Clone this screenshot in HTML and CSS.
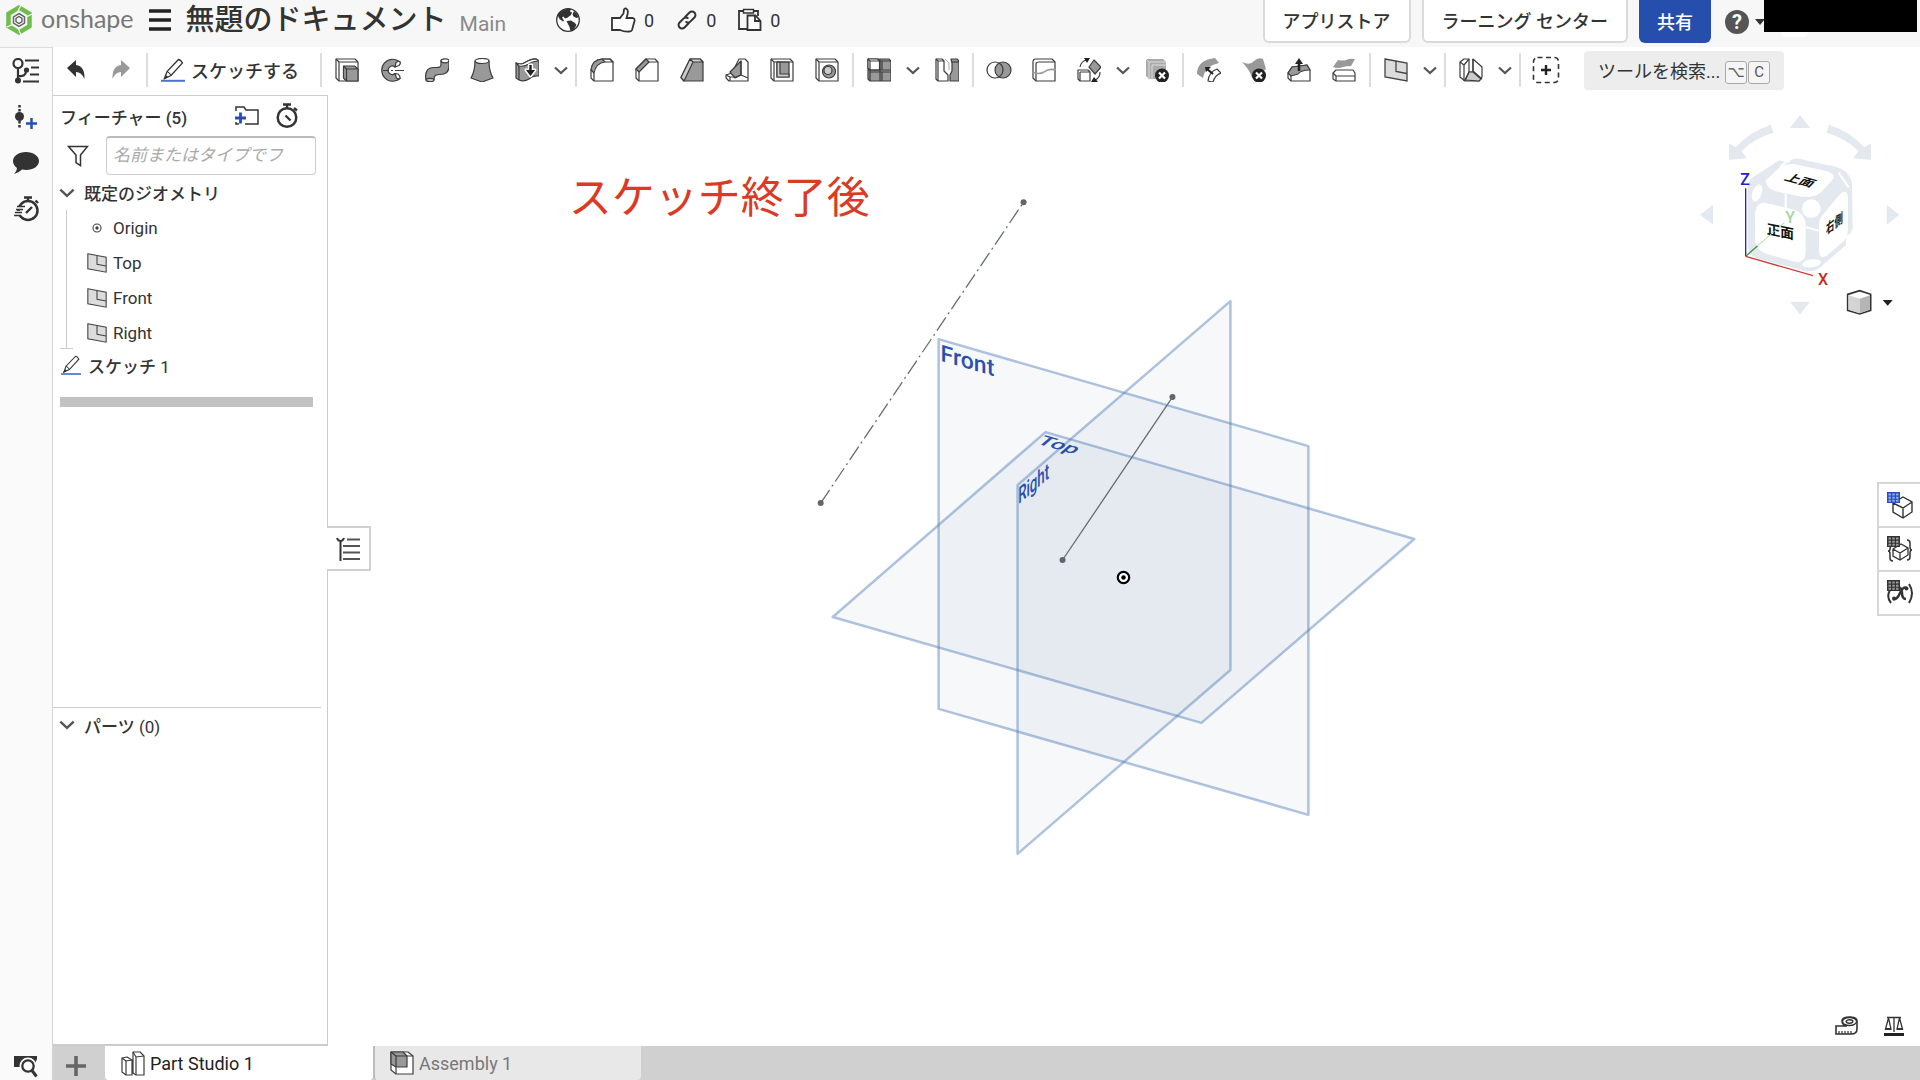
FILE: index.html
```html
<!DOCTYPE html>
<html lang="ja">
<head>
    <meta charset="UTF-8">
    <meta name="viewport" content="width=device-width, initial-scale=1.0">
    <title>無題のドキュメント | Part Studio 1</title>
    <link rel="stylesheet" href="styles.css">
</head>
<body>
    <!-- Shared icons -->
    <svg class="sprite" aria-hidden="true">
        <symbol id="chevron" viewBox="0 0 14 9"><path d="M1 1.5l6 5.5 6-5.5" fill="none" stroke="currentColor" stroke-width="2.2"/></symbol>
        <symbol id="plane" viewBox="0 0 24 24"><path d="M1 1l22 4v18L1 19z" fill="#dcdcdc" stroke="#444" stroke-width="1.3"/><path d="M12 3v10.500l11 2" fill="none" stroke="#444" stroke-width="1.300"/></symbol>
        <symbol id="pencil" viewBox="0 0 24 24"><path d="M3.500 20.500L6 13.500 17.500 1.500q2 0 4 3.500L10 17.500z" fill="#fff" stroke="#333" stroke-width="1.300"/><path d="M6 13.500q3 1 4 4M3 21l3.500-2-1.500-1.500z" fill="#333" stroke="#333"/><path d="M0 22.800h24" stroke="#4a74cf" stroke-width="2"/></symbol>
        <symbol id="grid" viewBox="0 0 13 11"><path d="M0 0h13v11H0z" fill="currentColor"/><path d="M1.500 1.500h2.500v2h-2.500zM5.300 1.500h2.500v2H5.300zM9 1.500h2.500v2H9zM1.500 4.700h2.500v2h-2.500zM5.300 4.700h2.500v2H5.300zM9 4.700h2.500v2H9zM1.500 7.800h2.500v2h-2.500zM5.300 7.800h2.500v2H5.300zM9 7.800h2.500v2H9z" fill="#fff" opacity=".5"/></symbol>
    </svg>

    <header class="header">
        <a class="logo" href="#" aria-label="onshape">
            <svg width="26" height="30" viewBox="0 0 26 30">
                <path d="M13 2.500l10.500 6.200v12.600L13 27.500 2.500 21.300V8.700z" fill="none" stroke="#6fbe4d" stroke-width="4.500"/>
                <path d="M15 0l-4 8M26 9l-6 3M1 22l7-3M15 30l-3-7" stroke="#f7f7f7" stroke-width="1.200"/>
                <path d="M13 8.500l5.500 3.300v6.400L13 21.500l-5.500-3.300v-6.400z" fill="none" stroke="#666" stroke-width="1.500"/>
                <path d="M13 11.500l3 1.800v3.400l-3 1.800-3-1.800v-3.400z" fill="none" stroke="#555" stroke-width="1.300"/>
            </svg>
            <span>onshape</span>
        </a>
        <button class="plain menu-btn" aria-label="メニュー">
            <svg width="22" height="22" viewBox="0 0 22 22"><path d="M0 2h22M0 11h22M0 20h22" stroke="#222" stroke-width="3.600"/></svg>
        </button>
        <h1 class="doc-title">無題のドキュメント</h1>
        <span class="branch">Main</span>
        <button class="plain globe" aria-label="公開">
            <svg width="24" height="24" viewBox="0 0 24 24"><circle cx="12" cy="12" r="11.300" fill="#fff" stroke="#333" stroke-width="1.300"/><path d="M4 4Q9 0 15 1l-1 2.500 2 1-1 2.500-4 3-2 .5-1.500-2-1.500 1 2 3-1 1-3.500-2.500L1.500 7z" fill="#333"/><path d="M18 3l2.500 2.500L22.500 9l-2 1-3-1.500-1-2zM10.500 13l4.500-.5 4 2.500 1.500 2-2.500 4-3.500 2-1-4z" fill="#333"/></svg>
        </button>
        <button class="plain stat">
            <svg width="26" height="26" viewBox="0 0 26 26"><path d="M2 11h8l3.500-4.500.5-4q.500-1.500 2.200-1 2.500 1.500 1.300 6l-1 3.500h6.500q2 .5 1.500 3l-2.500 9q-.5 1.500-2.500 1.500-5 .5-9.500-1.500H2z" fill="#fff" stroke="#333" stroke-width="1.800"/></svg>
            <span>0</span>
        </button>
        <button class="plain stat">
            <svg width="22" height="22" viewBox="0 0 22 22"><g transform="rotate(-45 11 11)" fill="none" stroke="#333" stroke-width="2"><path d="M10.500 14.500H4A3.500 3.500 0 0 1 4 7.500h5.500q3.500 0 3.500 3.500"/><path d="M11.500 7.500H18a3.500 3.500 0 0 1 0 7h-5.500Q9 14.500 9 11"/></g></svg>
            <span>0</span>
        </button>
        <button class="plain stat">
            <svg width="24" height="24" viewBox="0 0 24 24"><path d="M5 3H1v18h8M16 3h4v5" fill="none" stroke="#333" stroke-width="1.800"/><path d="M5.500 1.500h10v3.500h-10z" fill="#fff" stroke="#333" stroke-width="1.400"/><path d="M9.500 7.500h8l5 5.500V22h-13z" fill="#fff" stroke="#333" stroke-width="1.800"/><path d="M17 7.500V13h5.500" fill="none" stroke="#333" stroke-width="1.800"/></svg>
            <span>0</span>
        </button>
        <div class="header-right">
            <button class="top-btn">アプリストア</button>
            <button class="top-btn">ラーニング センター</button>
            <button class="top-btn share">共有</button>
            <button class="plain help" aria-label="ヘルプ"><span class="help-dot">?</span><span class="caret"></span></button>
            <div class="user"></div>
        </div>
    </header>

    <div class="body">
        <nav class="rail">
            <button class="plain" aria-label="バージョンと履歴">
                <svg width="28" height="26" viewBox="0 0 28 26"><g fill="none" stroke="#333" stroke-width="2.200"><circle cx="6" cy="5.500" r="4.500"/><path d="M6 10v12M6 18q8 1 8-5"/><path d="M13 2.500h14M19 9.500h8M18 16.500h9M11 23.500h16"/></g><circle cx="6" cy="22.500" r="3" fill="#333"/><circle cx="14.500" cy="12" r="2.600" fill="#333"/></svg>
            </button>
            <button class="plain" aria-label="バージョンを作成">
                <svg width="24" height="26" viewBox="0 0 24 26"><path d="M5.500 1v24" stroke="#333" stroke-width="2.500" stroke-dasharray="2.500 1.500"/><circle cx="5.500" cy="12.500" r="4.500" fill="#333"/><path d="M12 19.500h11M17.500 14v11" stroke="#264fb4" stroke-width="2.500"/></svg>
            </button>
            <button class="plain" aria-label="コメント">
                <svg width="28" height="24" viewBox="0 0 28 24"><path d="M14 1c7.500 0 13 4 13 9s-5.500 9-13 9l-4-.4Q7 22 2 23q3-3 3-6-4-3-4-7c0-5 5.500-9 13-9z" fill="#333"/></svg>
            </button>
            <button class="plain" aria-label="パフォーマンス">
                <svg width="26" height="26" viewBox="0 0 26 26"><circle cx="15" cy="14.500" r="9.500" fill="none" stroke="#333" stroke-width="2.500"/><path d="M2 12h9M0 17h9M0 21h6" stroke="#fafafa" stroke-width="4"/><path d="M11 1.500h8M15 1.500V5M22.500 4.500l2.500 2.500M13 17l6-6" stroke="#333" stroke-width="2.400"/><path d="M4 10.500h8M3 13.500h7M2 16.500h7M1 19.500h7" stroke="#333" stroke-width="1.300"/></svg>
            </button>
            <button class="plain rail-bottom" aria-label="タブを検索">
                <svg width="26" height="24" viewBox="0 0 26 24"><path d="M1 2h23v3L20 14h-6L6 13H1z" fill="#333"/><circle cx="15" cy="12" r="6.500" fill="#fafafa" stroke="#fafafa" stroke-width="4"/><circle cx="15" cy="12" r="5.700" fill="#fafafa" stroke="#333" stroke-width="2.300"/><path d="M19 16.500l4.500 6" stroke="#333" stroke-width="3"/></svg>
            </button>
        </nav>

        <div class="main">
            <div class="toolbar">
                <button class="tool" aria-label="元に戻す"><svg viewBox="0 0 24 24"><path d="M3 10l9-8v5q9 1 8.500 14-3-7-8.500-7v5z" fill="#333"/></svg></button>
                <button class="tool" aria-label="やり直し"><svg viewBox="0 0 24 24"><path d="M21 10l-9-8v5Q3 8 3.500 21q3-7 8.500-7v5z" fill="#999"/></svg></button>
                <span class="sep"></span>
                <button class="tool sketch"><svg viewBox="0 0 24 24"><use href="#pencil"/></svg>スケッチする</button>
                <span class="sep"></span>
                <button class="tool" aria-label="押し出し"><svg class="ico" viewBox="0 0 24 24"><path class="w" d="M1 1h19l3 3v19H4l-3-3z"/><path class="n" d="M4 4h19M4 4v19M1 1l3 3" stroke-width=".8"/><path class="g" d="M8.500 8h11l3.500 3v12H11.500l-3-3z"/><path class="n" d="M8.500 8l3 3H23M11.500 11v12"/></svg></button>
                <button class="tool" aria-label="回転"><svg class="ico" viewBox="0 0 24 24"><path class="g" d="M20 4A11 11 0 1 0 20 20.500L15 15.500A4.200 4.200 0 1 1 15 9z"/><path class="w" d="M15 9l1-4.500q3-2 4-.5 1 1.500-1 3.500zM15 15.500l3 .5q2.500 2 2 4.500-1.500 1-3.500-.5z"/><path class="n" d="M3 12.500h6M11 12.500h2M15 12.500h9"/></svg></button>
                <button class="tool" aria-label="スイープ"><svg class="ico" viewBox="0 0 24 24"><path class="g" d="M1 22C-.5 13 3 9.500 9 9.500c5 0 7 .5 7-3.500V2.500h8V8c0 7-4 8.500-9 8.500-4.500 0-6 1-6 5.500q-4 3-8 0z"/><ellipse class="w" cx="20" cy="2.800" rx="4" ry="2"/><ellipse class="l" cx="5" cy="22" rx="4" ry="1.600"/></svg></button>
                <button class="tool" aria-label="ロフト"><svg class="ico" viewBox="0 0 24 24"><path class="g" d="M5 3q0 10-4 17l11 4 11-4Q19 13 19 3z"/><ellipse class="w" cx="12" cy="3" rx="7" ry="2.500"/></svg></button>
                <button class="tool" aria-label="厚み"><svg class="ico" viewBox="0 0 24 24"><path class="g" d="M1 5q5 2 8 0 8-5 12-4l3 2v15q-6-1-10 3-5 3-10 1l-3-2z"/><path class="w" d="M1 5q5 2 8 0 7-4 12-4l3 2q-6 0-10 3-5 3-10 2z"/><path class="n" d="M4 8v14"/><path d="M14.300 7h2.400v5H20l-4.500 6L11 12h3.300z" fill="#222" stroke="#fff" stroke-width="3" paint-order="stroke"/></svg></button>
                <button class="more" aria-label="その他のフィーチャー"><svg><use href="#chevron"/></svg></button>
                <span class="sep"></span>
                <button class="tool" aria-label="フィレット"><svg class="ico" viewBox="0 0 24 24"><path class="w" d="M1 12Q2 2 12 1h8l3 3v19H4l-3-3z"/><path class="g" d="M1 12Q2 2 12 1l3 3Q6 5 4 15z"/><path class="n" d="M12 1h8l3 3h-8M4 15v8"/></svg></button>
                <button class="tool" aria-label="面取り"><svg class="ico" viewBox="0 0 24 24"><path class="w" d="M1 11L11 1h9l3 3v19H4l-3-3z"/><path class="g" d="M1 11L11 1l3 3L4 14z"/><path class="n" d="M14 4h9M4 14v9"/></svg></button>
                <button class="tool" aria-label="ドラフト"><svg class="ico" viewBox="0 0 24 24"><path class="g" d="M1 19.500L10 1h10l3 3v19H4z"/><path class="l" d="M10 1h10l3 3H13zM1 19.500L10 1l3 3L4 23z"/></svg></button>
                <button class="tool" aria-label="リブ"><svg class="ico" viewBox="0 0 24 24"><path class="w" d="M1 17l6-2L14 1h6l3 3v19H4l-3-3z" stroke="none"/><path class="g" d="M5 14L16 3v14l-6 3z"/><path class="n" d="M16 3v14l7 3M1 17l4 2h6l5-2M5 19v4"/></svg></button>
                <button class="tool" aria-label="シェル"><svg class="ico" viewBox="0 0 24 24"><path class="w" d="M1 1h19l3 3v19H4l-3-3z"/><path class="g" d="M7 4h12v15H7z"/><path class="l" d="M7 4h3v12h9v3H7z"/><path class="n" d="M4 4h19M4 4v19M1 1l3 3"/></svg></button>
                <button class="tool" aria-label="穴"><svg class="ico" viewBox="0 0 24 24"><path class="w" d="M1 1h19l3 3v19H4l-3-3z"/><path class="n" d="M4 4h19M4 4v19M1 1l3 3"/><circle class="g" cx="14" cy="13.500" r="6.500"/><circle class="l" cx="13" cy="12.500" r="4"/></svg></button>
                <span class="sep"></span>
                <button class="tool" aria-label="パターン"><svg class="ico" viewBox="0 0 24 24"><path class="g" d="M1 1h21l2 2v20H3l-2-2z"/><path class="w" d="M1 1h9.500l2 2v9H3L1 10z"/><path class="n" d="M3 3h21M3 3v20M13 1v22M1 12h23M1 1l2 2M15 3v9M15 14v9M3 14h21" stroke-width="1.300"/></svg></button>
                <button class="more" aria-label="その他のパターン"><svg><use href="#chevron"/></svg></button>
                <button class="tool" aria-label="ミラー"><svg class="ico" viewBox="0 0 24 24"><path class="w" d="M1 1h6l2 2v10l4 4v6H3l-2-2z"/><path class="n" d="M3 3h6M3 3v20M1 1l2 2"/><path class="g" d="M16 1h6l2 2v20h-9v-6l2-4V5z"/><path class="n" d="M17 4h7"/><path d="M10 1l4 4v7" fill="none" stroke="#aaa"/></svg></button>
                <span class="sep"></span>
                <button class="tool" aria-label="ブーリアン"><svg class="ico wide" viewBox="-1 -2 26 28"><circle class="w" cx="8" cy="12" r="8"/><circle class="g" cx="16" cy="12" r="8"/><path class="n" d="M12 5.100a8 8 0 0 1 0 13.800"/></svg></button>
                <button class="tool" aria-label="分割"><svg class="ico" viewBox="0 0 24 24"><path class="w" d="M1 4q0-3 3-3h16l3 3v19H4l-3-3z"/><path class="n" d="M4 6q0-2 3-2h16M4 6v17"/><path d="M0 14q7 3 12 0 5-4 12-2" fill="none" stroke="#999" stroke-width="1.600"/></svg></button>
                <button class="tool" aria-label="変換"><svg class="ico" viewBox="0 0 24 24"><path class="w" d="M1 12h10l2 2v9H3l-2-2z"/><path class="n" d="M3 14h10M3 14v9"/><path class="g" d="M17 2l7 7-6 7-6-7z"/><path class="n" d="M3 9q1-6 7-7M23 14q0 6-5 8" stroke-width="2.200"/><path d="M7 0h6l-3 5zM21 24h-7l3-5z" fill="#222"/></svg></button>
                <button class="more" aria-label="その他の変換"><svg><use href="#chevron"/></svg></button>
                <button class="tool" aria-label="パーツを削除"><svg class="ico" viewBox="0 0 24 24"><path d="M1 1h17l3 3v17H4l-3-3z" fill="#aaa"/><path d="M4 22V4h17M1 1l3 3M7 22V7h14" fill="none" stroke="#ddd"/><circle cx="17" cy="17.500" r="7" fill="#222"/><path d="M14 14.500l6 6M20 14.500l-6 6" stroke="#fff" stroke-width="2.200"/></svg></button>
                <span class="sep"></span>
                <button class="tool" aria-label="フィレットを修正"><svg class="ico" viewBox="0 0 24 24"><path d="M0 16Q0 2 18 0l4 5Q8 8 6 20z" fill="#999"/><path class="w" d="M11 23q1-9 9-12l4 4q-6 2-8 9z"/><path d="M16 16l-6-5" stroke="#222" stroke-width="2.200"/><path d="M8 9h6l-5 5z" fill="#222"/></svg></button>
                <button class="tool" aria-label="面を削除"><svg class="ico" viewBox="0 0 24 24"><path d="M0 4q8 4 12-1 4-4 9-2l3 10-14 9q-2-8-10-16z" fill="#999"/><circle cx="17" cy="17.500" r="7" fill="#222"/><path d="M14 14.500l6 6M20 14.500l-6 6" stroke="#fff" stroke-width="2.200"/></svg></button>
                <button class="tool" aria-label="面を移動"><svg class="ico" viewBox="0 0 24 24"><path class="w" d="M1 15l4-6 15-2 3 5v11H4l-3-3z"/><path class="g" d="M1 15l4-6 15-2 3 5q-9 0-12 4l-7 2z"/><path class="n" d="M4 18v5"/><path d="M12 13V4" stroke="#222" stroke-width="2.500"/><path d="M8 6l4-6 4 6z" fill="#222"/></svg></button>
                <button class="tool" aria-label="面を置換"><svg class="ico" viewBox="0 0 24 24"><path d="M1 9l5-7q5 1 8 0 4-2 9-1l-4 7q-5 0-8 1-5 2-10 0z" fill="#999"/><path class="w" d="M1 15l3-3h17l2 3v8H4l-3-2z"/><path class="n" d="M1 15l3 3h19M4 18v5"/></svg></button>
                <span class="sep"></span>
                <button class="tool" aria-label="平面"><svg viewBox="0 0 24 24"><use href="#plane"/></svg></button>
                <button class="more" aria-label="その他の平面"><svg><use href="#chevron"/></svg></button>
                <span class="sep"></span>
                <button class="tool" aria-label="フレーム"><svg class="ico" viewBox="0 0 24 24"><path class="w" d="M1 4l4-3h5v13h4V1l9 8v10l-3 4H6l-5-4z"/><path class="l" d="M6 22l4-8h4l8 7-2 2z"/><path class="n" d="M1 4l4 3v16M5 7l5-6M10 14l-4 9M14 13l9 8M14 1v12"/></svg></button>
                <button class="more" aria-label="その他のフレーム"><svg><use href="#chevron"/></svg></button>
                <span class="sep"></span>
                <button class="tool" aria-label="カスタムフィーチャー"><svg class="wide" viewBox="0 0 28 28"><rect x="1.500" y="1.500" width="25" height="25" rx="4" fill="none" stroke="#333" stroke-width="1.600" stroke-dasharray="5 3.500"/><path d="M14 9v10M9 14h10" stroke="#222" stroke-width="2.400"/></svg></button>
                <button class="tool-search">ツールを検索...<span class="keys"><kbd>⌥</kbd><kbd>C</kbd></span></button>
            </div>

            <div class="workspace">
                <aside class="panel">
                    <section class="features">
                        <div class="panel-head">
                            <h2>フィーチャー (5)</h2>
                            <button class="plain" aria-label="フォルダーを追加"><svg width="26" height="22" viewBox="0 0 26 22"><path d="M2 6V2h8l2 3h12v14H11M2 17v2h3" fill="none" stroke="#333" stroke-width="1.500"/><path d="M1 13h11M6.500 7.500v11" stroke="#264fb4" stroke-width="2.800"/></svg></button>
                            <button class="plain" aria-label="ロールバック時間"><svg width="22" height="26" viewBox="0 0 22 26"><circle cx="11" cy="14.500" r="9.300" fill="none" stroke="#333" stroke-width="2.500"/><path d="M7 1.500h8M11 1.500V5M18 5l3 2.500M9.500 12.500l5 5" stroke="#333" stroke-width="2.300"/></svg></button>
                        </div>
                        <div class="filter">
                            <button class="plain" aria-label="フィルター"><svg width="22" height="22" viewBox="0 0 22 22"><path d="M1.500 1.500h19L13.500 10v10.500L9 17.500V10z" fill="#fff" stroke="#333" stroke-width="1.500"/></svg></button>
                            <input type="text" placeholder="名前またはタイプでフ" aria-label="フィーチャーをフィルター">
                        </div>
                        <ul class="tree">
                            <li>
                                <div class="row group"><svg class="chev"><use href="#chevron"/></svg>既定のジオメトリ</div>
                                <ul class="children">
                                    <li class="row"><svg viewBox="0 0 20 20"><circle cx="10" cy="10" r="4" fill="none" stroke="#444" stroke-width="1.100"/><circle cx="10" cy="10" r="1.700" fill="#444"/></svg>Origin</li>
                                    <li class="row"><svg><use href="#plane"/></svg>Top</li>
                                    <li class="row"><svg><use href="#plane"/></svg>Front</li>
                                    <li class="row"><svg><use href="#plane"/></svg>Right</li>
                                </ul>
                            </li>
                            <li class="row sketch-row"><svg><use href="#pencil"/></svg><span>スケッチ <span class="num">1</span></span></li>
                        </ul>
                        <div class="rollback"></div>
                    </section>
                    <section class="parts">
                        <div class="row group"><svg class="chev"><use href="#chevron"/></svg><span>パーツ <span class="num">(0)</span></span></div>
                    </section>
                </aside>

                <div class="canvas">
                    <svg class="scene" viewBox="327 95 1593 951">
                        <g class="planes">
                            <path d="M938 339l370 107v369L938 709z"/>
                            <path d="M1045 432l369 107-213 184-369-106z"/>
                            <path d="M1017 485l213-184v369l-213 184z"/>
                        </g>
                        <g class="plane-names">
                            <text transform="matrix(1 .289 0 1 938 339)" x="2" y="21">Front</text>
                            <text transform="matrix(1 .289 -.576 .5 1045 432)" x="2" y="21">Top</text>
                            <text transform="matrix(.576 -.497 0 1 1017 485)" x="1" y="20">Right</text>
                        </g>
                        <g class="sketch-lines">
                            <path d="M820 503L1023 202" stroke-dasharray="16 4 2 4"/>
                            <path d="M1062 560l110-163"/>
                        </g>
                        <g fill="#5f666d">
                            <circle cx="820" cy="503" r="3"/><circle cx="1023" cy="202" r="3"/>
                            <circle cx="1062" cy="560" r="3"/><circle cx="1172" cy="397" r="3"/>
                        </g>
                        <circle cx="1123" cy="577.500" r="5.700" fill="#fff" stroke="#000" stroke-width="2.200"/>
                        <circle cx="1123" cy="577.500" r="2.200"/>
                        <text class="note" x="568" y="213">スケッチ終了後</text>
                    </svg>

                    <button class="panel-toggle" aria-label="リストを折りたたむ">
                        <svg width="26" height="26" viewBox="0 0 26 26"><path d="M2 2q1 3 3.500 3T9 2M5.500 5v20" fill="none" stroke="#333" stroke-width="2"/><path d="M12 3.500h13M8 10h17M8 16.500h17M8 23h17" stroke="#555" stroke-width="2"/></svg>
                    </button>

                    <!-- View cube, drawn at three units per pixel -->
                    <svg class="view-cube" viewBox="0 0 720 690">
                        <g fill="#e4e9ef">
                            <path d="M360 44l30 40h-60zM360 643l30-38h-60zM60 344l39-30v60zM658 344l-38-30v60z"/>
                            <path d="M273 74l7 24q-60 18-95 55l15 22-53 5V130l20 12q40-46 106-68zM447 74l-7 24q60 18 95 55l-15 22 53 5V130l-20 12q-40-46-106-68z"/>
                            <path d="M203 265q0-20 14-32l75-49q12-6 22 4l12 0q10-14 30-12l110 24q40 10 50 45l2 140-8 18-12 10v22l-75 65q-15 14-45 14l-150-40q-25-10-25-40z"/>
                        </g>
                        <g fill="#fff">
                            <path d="M258 240l44-40q20-10 42-7l95 20q25 8 22 22l-36 40q-20 18-55 16l-85-18q-30-10-27-33z"/>
                            <path d="M225 350q0-44 30-42l82 20q38 10 40 50v75q0 36-30 33l-86-24q-36-12-36-48z"/>
                            <path d="M417 375q0-20 16-36l48-58q20-15 23 10v95q0 26-16 40l-46 40q-25 16-25-16z"/>
                            <circle cx="394" cy="326" r="28"/>
                            <ellipse cx="231" cy="279" rx="14" ry="27" transform="rotate(20 231 279)"/>
                            <ellipse cx="395" cy="490" rx="28" ry="12" transform="rotate(-8 395 490)"/>
                        </g>
                        <path d="M317 280v44M378 382l38 10M476 218l30 44M300 202l20-18M496 410l24-8" stroke="#fff" stroke-width="6"/>
                        <g class="cube-faces">
                            <text transform="matrix(1 .27 -.6 .62 310 239)" font-size="42">上面</text>
                            <text transform="matrix(1 .2 0 1 260 401)" font-size="41">正面</text>
                            <text transform="matrix(.6 -.47 0 1 438 405)" font-size="42">右側</text>
                        </g>
                        <g stroke-width="4">
                            <path d="M197 469V265" stroke="#2424d0"/>
                            <path d="M197 469l36-32" stroke="#3c9a34"/>
                            <path d="M233 437l80-69" stroke="#a5dba0" stroke-width="3"/>
                            <path d="M197 469l202 58" stroke="#d03a34"/>
                        </g>
                        <g class="cube-axes">
                            <text x="181" y="254" fill="#2020d8">Z</text>
                            <text x="316" y="368" fill="#a0d89c">Y</text>
                            <text x="414" y="554" fill="#c82a20">X</text>
                        </g>
                        <path d="M503 583l36-11 33 11v48l-33 11-36-11z" fill="#fff" stroke="#333" stroke-width="5"/>
                        <path d="M505 586l34 10v44l-34-11z" fill="#d4d4d4"/>
                        <path d="M539 596l31-10v43l-31 11z" fill="#b5b5b5"/>
                        <path d="M608 600h30l-15 17z" fill="#222"/>
                    </svg>

                    <div class="side-tabs">
                        <button aria-label="部品表"><svg width="28" height="28" viewBox="0 0 28 28"><path d="M7 12l10-6 9 5v10l-9 6-10-6zM7 12l10 5 9-6M17 17v10" fill="#fff" stroke="#333" stroke-width="1.400"/><g color="#2350c8"><use href="#grid" x="1" y="1" width="13" height="11"/></g></svg></button>
                        <button aria-label="コンフィギュレーション"><svg width="28" height="28" viewBox="0 0 28 28"><path d="M7 14l8-5 7 4v7l-8 5-7-4zM7 14l7 4 8-5M14 18v7" fill="#fff" stroke="#333" stroke-width="1.300"/><path d="M6 11q-2 0-2 3 0 2-2 2 2 0 2 3v4q0 3 3 3M21 5q3 0 3 3v4q0 3 2 3-2 0-2 3v4q0 3-3 3" fill="none" stroke="#333" stroke-width="1.500"/><g color="#333"><use href="#grid" x="1" y="1" width="13" height="11"/></g></svg></button>
                        <button aria-label="変数"><svg width="28" height="28" viewBox="0 0 28 28"><path d="M4 11q-4 7 1 13M23 5q6 9 0 19" fill="none" stroke="#333" stroke-width="2"/><path d="M12 9q4-1 4 5t4 6M21 9q-4-2-7 5T7 20" fill="none" stroke="#333" stroke-width="2.500"/><circle cx="20.500" cy="9.500" r="2" fill="#333"/><circle cx="8" cy="19.500" r="2" fill="#333"/><g color="#333"><use href="#grid" x="1" y="1" width="13" height="11"/></g></svg></button>
                    </div>

                    <div class="measure">
                        <button class="plain" aria-label="計測"><svg width="24" height="20" viewBox="0 0 24 20"><path d="M1 10h11q-5-1-5-5 0-4 8-4 7 0 7 4v8q0 5-6 5H1z" fill="#fff" stroke="#333" stroke-width="1.600"/><ellipse cx="14.500" cy="5.500" rx="7" ry="4" fill="none" stroke="#333" stroke-width="1.300"/><ellipse cx="14.500" cy="5.500" rx="3.300" ry="1.700" fill="none" stroke="#333" stroke-width="1.500"/><path d="M4 18v-3M7 18v-3M10 18v-3M13 18v-3M16 18v-3" stroke="#333" stroke-width="1.200"/></svg></button>
                        <button class="plain" aria-label="質量特性"><svg width="20" height="20" viewBox="0 0 20 20"><path d="M3 1.500h14M10 1v15M4.500 2L1.500 13h5.500L4.500 2M15.500 2L13 13h5.500z" fill="none" stroke="#333" stroke-width="1.300"/><path d="M1 13h6M13 13h6" stroke="#333" stroke-width="2"/><path d="M0 18.500h20" stroke="#222" stroke-width="3"/></svg></button>
                    </div>
                </div>
            </div>

            <nav class="tabs">
                <button class="add-tab" aria-label="タブを追加"><svg width="20" height="20" viewBox="0 0 20 20"><path d="M10 0v20M0 10h20" stroke="#666" stroke-width="3.600"/></svg></button>
                <a class="tab active" href="#"><svg class="ico" width="24" height="26" viewBox="0 0 24 26"><path class="w" d="M1 8l5-1 5 3v15H5l-4-3zM12 2h7l4 4v19H15l-3-2z"/><path class="n" d="M1 8l4 3v14M5 11l6-1M12 2l3 5v18M15 7l8-1"/></svg>Part Studio 1</a>
                <a class="tab" href="#"><svg class="ico" width="24" height="26" viewBox="0 0 24 26"><path class="w" d="M1 2h17l5 4v18H6l-5-4z"/><path class="g" d="M1 2h12l4 4v11H6l-5-3z"/><path class="n" d="M1 2l5 4h17M6 6v18"/></svg>Assembly 1</a>
            </nav>
        </div>
    </div>
</body>
</html>
```

FILE: styles.css
```css
* {
    box-sizing: border-box;
}

html, body {
    margin: 0;
    height: 100%;
    overflow: hidden;
}

body {
    display: flex;
    flex-direction: column;
    background-color: #fff;
    color: #333;
    font-family: Roboto, "Noto Sans CJK JP", sans-serif;
    font-size: 17px;
}

button {
    font: inherit;
    color: inherit;
    cursor: pointer;
}

svg {
    display: block;
    flex: none;
}

ul {
    list-style: none;
    margin: 0;
    padding: 0;
}

.sprite {
    position: absolute;
    width: 0;
    height: 0;
}

.plain {
    display: flex;
    align-items: center;
    justify-content: center;
    padding: 0;
    border: none;
    background: none;
}

/* Header */
.header {
    display: flex;
    align-items: center;
    flex: none;
    height: 47px;
    padding: 0 3px 7px 6px;
    background-color: #f7f7f7;
    white-space: nowrap;
}

.logo {
    display: flex;
    align-items: center;
    gap: 9px;
    color: #777;
    font-family: Lato, sans-serif;
    font-size: 25px;
    line-height: 30px;
    text-decoration: none;
}

.logo span {
    padding-bottom: 4px;
}

.menu-btn {
    margin: 0 15px;
}

.doc-title {
    margin: 0;
    font-size: 29px;
    font-weight: 500;
    line-height: 40px;
}

.branch {
    margin-left: 13px;
    padding-top: 7px;
    color: #8a8a8a;
    font-size: 21px;
}

.globe {
    margin-left: 50px;
    margin-right: 8px;
}

.stat {
    gap: 8px;
    margin-left: 22px;
    font-size: 18px;
}

.header-right {
    display: flex;
    align-self: flex-start;
    align-items: flex-start;
    gap: 11px;
    margin-left: auto;
}

.top-btn {
    height: 43px;
    padding: 0 18px 2px;
    border: 2px solid #dadada;
    border-top: none;
    border-radius: 0 0 6px 6px;
    background-color: #fff;
    font-size: 18px;
    font-weight: 500;
}

.share {
    border: none;
    background-color: #264fad;
    color: #fff;
}

.help {
    height: 43px;
    gap: 6px;
    margin-left: 3px;
}

.help-dot {
    width: 24px;
    height: 24px;
    border-radius: 50%;
    background-color: #555;
    color: #fff;
    font-size: 20px;
    font-weight: 700;
    line-height: 24px;
}

.caret {
    border: 5px solid transparent;
    border-top: 6px solid #333;
    border-bottom: none;
}

.user {
    width: 153px;
    height: 32px;
    margin-left: -12px;
    background-color: #000;
}

/* Lower edge of the avatar */
.user::after {
    content: "";
    display: block;
    width: 27px;
    height: 5px;
    margin: 32px 0 0 17px;
    border-radius: 0 0 14px 14px;
    background-color: #fff;
}

/* Left rail */
.body {
    display: flex;
    flex: 1;
    min-height: 0;
}

.rail {
    display: flex;
    flex-direction: column;
    align-items: center;
    flex: none;
    width: 53px;
    border-top: 1px solid #ddd;
    border-right: 1px solid #d4d4d4;
    background-color: #fafafa;
}

.rail .plain {
    width: 100%;
    height: 46px;
}

.rail .rail-bottom {
    height: 28px;
    margin-top: auto;
}

.main {
    display: flex;
    flex-direction: column;
    flex: 1;
    min-width: 0;
}

/* Toolbar */
.toolbar {
    display: flex;
    align-items: center;
    flex: none;
    height: 48px;
    padding-bottom: 2px;
    white-space: nowrap;
}

.tool, .more {
    display: flex;
    align-items: center;
    justify-content: center;
    flex: none;
    width: 45px;
    height: 40px;
    padding: 0;
    border: none;
    background: none;
}

.tool svg {
    width: 24px;
    height: 24px;
}

.tool .wide {
    width: 28px;
    height: 28px;
}

.tool.sketch {
    width: auto;
    gap: 6px;
    padding: 0 18px 0 11px;
    font-size: 18px;
    font-weight: 500;
}

.more {
    width: 23px;
    color: #555;
}

.more svg {
    width: 14px;
    height: 9px;
}

.sep {
    flex: none;
    width: 2px;
    height: 34px;
    margin: 0 2px 0 3px;
    background-color: #ddd;
}

.ico path, .ico circle, .ico ellipse {
    stroke-linejoin: round;
}

.ico .w, .ico .g, .ico .l, .ico .n {
    stroke: #3c3c3c;
    stroke-width: 1.2px;
}

.ico .w { fill: #fff; }
.ico .g { fill: #999; }
.ico .l { fill: #ccc; }
.ico .n { fill: none; }

.tool-search {
    display: flex;
    align-items: center;
    gap: 5px;
    height: 39px;
    margin-left: 16px;
    padding: 0 14px;
    border: none;
    border-radius: 4px;
    background-color: #ededed;
    font-size: 18px;
}

.keys {
    display: flex;
    gap: 1px;
    padding-top: 4px;
}

kbd {
    width: 22px;
    height: 23px;
    border: 1px solid #aaa;
    border-radius: 3px;
    background-color: #f5f5f5;
    color: #555;
    font-family: Roboto, "DejaVu Sans", sans-serif;
    font-size: 15px;
    line-height: 21px;
    text-align: center;
}

/* Feature panel */
.workspace {
    display: flex;
    flex: 1;
    min-height: 0;
}

.panel {
    display: flex;
    flex-direction: column;
    flex: none;
    width: 275px;
    border: 1px solid #ccc;
    border-left: none;
    border-bottom-width: 2px;
}

.features {
    flex: 20 1 0;
    margin-right: 6px;
    border-bottom: 1px solid #ccc;
}

.parts {
    flex: 11 1 0;
}

.panel-head {
    display: flex;
    align-items: center;
    gap: 16px;
    height: 40px;
    padding: 0 23px 0 7px;
}

.panel-head h2 {
    flex: 1;
    margin: 0;
    font-size: 17px;
    font-weight: 500;
}

.filter {
    display: flex;
    align-items: center;
    gap: 17px;
    padding: 0 5px 0 14px;
}

.filter input {
    flex: 1;
    min-width: 0;
    height: 39px;
    padding: 0 6px 2px;
    border: 1px solid #ccc;
    border-top: 2px solid #bbb;
    border-radius: 4px;
    font: inherit;
}

.filter input::placeholder {
    color: #aaa;
    font-style: italic;
}

.row {
    display: flex;
    align-items: center;
    height: 35px;
}

.group {
    gap: 9px;
    padding-left: 6px;
    font-weight: 500;
}

.num {
    font-weight: 400;
}

.row .chev {
    width: 16px;
    height: 10px;
    color: #555;
}

.row svg {
    width: 20px;
    height: 20px;
}

.children {
    margin-left: 13px;
    border-left: 1px solid #ccc;
}

.children .row {
    gap: 6px;
    padding-left: 20px;
}

/* Foot of the tree line */
.children::after {
    content: "";
    display: block;
    width: 13px;
    margin: -2px 0 0 -7px;
    border-top: 1px solid #ccc;
}

.sketch-row {
    gap: 7px;
    height: 32px;
    padding-left: 8px;
    font-weight: 500;
}

.rollback {
    height: 10px;
    margin: 16px 8px 0 7px;
    background-color: #c2c2c2;
}

/* Canvas */
.canvas {
    position: relative;
    flex: 1;
    min-width: 0;
}

.scene {
    width: 100%;
    height: 100%;
}

.planes path {
    fill: rgba(50, 95, 135, 0.043);
    stroke: rgba(80, 125, 185, 0.45);
    stroke-width: 2.5px;
    stroke-linejoin: round;
}

.plane-names {
    fill: #2a50ad;
    font-size: 23px;
    font-weight: 500;
}

.sketch-lines {
    fill: none;
    stroke: #666c72;
    stroke-width: 1.3px;
}

.note {
    fill: #dc3a24;
    font-size: 43px;
}

.panel-toggle {
    position: absolute;
    top: 431px;
    left: -1px;
    display: flex;
    align-items: center;
    justify-content: center;
    width: 44px;
    height: 45px;
    padding: 0;
    border: 2px solid #d0d0d0;
    border-left: none;
    background-color: #fff;
}

.view-cube {
    position: absolute;
    top: 5px;
    right: 0;
    width: 240px;
    height: 230px;
}

.cube-faces {
    fill: #111;
    font-weight: 700;
}

.cube-axes {
    font-size: 48px;
    font-weight: 500;
}

.side-tabs {
    position: absolute;
    top: 387px;
    right: 0;
    width: 43px;
    border: 2px solid #d6d6d6;
    border-right: none;
}

.side-tabs button {
    display: flex;
    align-items: center;
    justify-content: center;
    width: 100%;
    height: 42px;
    padding: 0;
    border: none;
    background-color: #fff;
}

.side-tabs button + button {
    height: 44px;
    border-top: 2px solid #d6d6d6;
}

.measure {
    position: absolute;
    right: 16px;
    bottom: 10px;
    display: flex;
    gap: 25px;
}

/* Document tabs */
.tabs {
    display: flex;
    flex: none;
    height: 34px;
    background-color: #d0d0d0;
}

.add-tab {
    display: flex;
    align-items: center;
    justify-content: center;
    width: 52px;
    padding: 5px 7px 0 0;
    border: none;
    background: none;
}

.tab {
    display: flex;
    align-items: center;
    gap: 5px;
    width: 268px;
    padding-left: 15px;
    border-left: 2px solid #bbb;
    border-radius: 0 0 4px 4px;
    background-color: #e8e8e8;
    color: #777;
    font-size: 18px;
    text-decoration: none;
}

.tab.active {
    padding-left: 16px;
    border-left: none;
    background-color: #fff;
    color: #222;
}
```
